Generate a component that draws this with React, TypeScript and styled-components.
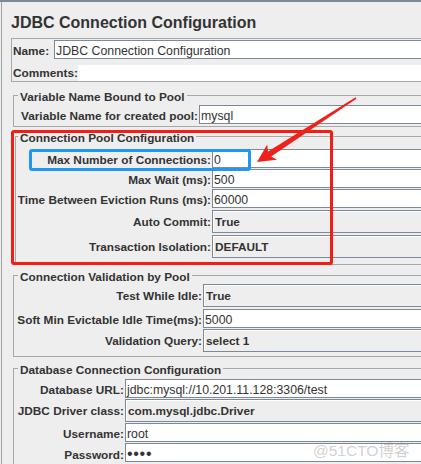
import React from "react";
import styled, { createGlobalStyle } from "styled-components";

const GlobalStyle = createGlobalStyle`
  html, body {
    margin: 0;
    padding: 0;
    background: #eeeeee;
    overflow: hidden;
  }
  body {
    font-family: "Liberation Sans", Arial, "Noto Sans CJK SC", sans-serif;
    color: #333333;
  }
`;

const Window = styled.div`
  position: relative;
  width: 421px;
  height: 464px;
  box-sizing: border-box;
  border-top: 2px solid #7d8b99;
  padding-left: 1px;
  overflow: hidden;
`;

const Content = styled.div`
  width: 480px;
  height: 100%;
  border-left: 1px solid #a3a3a3;
`;

const Title = styled.h1`
  margin: 0 0 5px;
  padding: 11px 0 0 9px;
  font-size: 16px;
  line-height: 20px;
  font-weight: bold;
  color: #333333;
`;

const NamePanel = styled.div`
  margin-left: 9px;
  border: 1px solid #a8a8a8;
  border-right: none;
  padding: 1px 0 0 1px;
  display: flex;
  flex-direction: column;
  gap: 6px;
`;

const NameRow = styled.div`
  display: flex;
  align-items: baseline;
  gap: 5px;
`;

const CommentsRow = styled.div`
  display: flex;
  align-items: center;
  height: 16px;
`;

const CommentsArea = styled.div`
  flex: 1;
  align-self: stretch;
  background: #ffffff;
`;

const Label = styled.span`
  font-size: 11.8px;
  font-weight: bold;
  color: #333333;
  white-space: nowrap;
`;

const RowLabel = styled(Label)`
  justify-self: end;
  padding-right: 1px;
`;

const TextField = styled.div`
  flex: 1;
  height: 19px;
  box-sizing: border-box;
  border: 1px solid #7a8a99;
  background: #ffffff;
  padding: 3px 1px 0;
  line-height: 14px;
  font-size: 12.3px;
  color: #333333;
  white-space: nowrap;
  overflow: hidden;
`;

const Combo = styled.div`
  height: 23px;
  box-sizing: border-box;
  border: 1px solid #7a8a99;
  box-shadow: inset 1px 1px 0 #ffffff;
  background: #eeeeee;
  padding: 4px 2px 0;
  line-height: 14px;
  font-size: 11.8px;
  font-weight: bold;
  color: #333333;
  white-space: nowrap;
  overflow: hidden;
`;

const Dots = styled.span`
  font-size: 16px;
  letter-spacing: 0.7px;
`;

const Group = styled.fieldset<{ $left?: number; $mt: number; $pt: number; $pb: number }>`
  margin: ${(p) => p.$mt}px 0 0 ${(p) => p.$left ?? 11}px;
  padding: ${(p) => p.$pt}px 0 ${(p) => p.$pb}px 0;
  border: 1px solid #a8a8a8;
  border-right: none;
  min-width: 0;
`;

const Legend = styled.legend<{ $offset?: number }>`
  margin-left: ${(p) => p.$offset ?? 4}px;
  padding: 3px 2px 0;
  font-size: 11.8px;
  line-height: 14px;
  font-weight: bold;
  color: #333333;
`;

const Row = styled.div<{ $label: number; $mt?: number }>`
  display: grid;
  grid-template-columns: ${(p) => p.$label}px 1fr;
  align-items: baseline;
  margin-top: ${(p) => p.$mt ?? 0}px;
`;

const Highlight = styled.div<{ $x: number; $y: number; $w: number; $h: number; $color: string }>`
  position: absolute;
  left: ${(p) => p.$x}px;
  top: ${(p) => p.$y}px;
  width: ${(p) => p.$w}px;
  height: ${(p) => p.$h}px;
  box-sizing: border-box;
  border: 3px solid ${(p) => p.$color};
  border-radius: 3px;
  pointer-events: none;
`;

const ArrowLayer = styled.svg`
  position: absolute;
  left: 0;
  top: -2px;
  pointer-events: none;
`;

const Watermark = styled.div`
  position: absolute;
  left: 313px;
  top: 436px;
  font-family: "Liberation Sans", "Noto Sans CJK SC", sans-serif;
  font-size: 15.5px;
  color: rgba(150, 150, 150, 0.45);
  white-space: nowrap;
  pointer-events: none;
`;

type Field = { label: string; value: string; kind: "text" | "combo" | "password"; mt?: number };

const renderValue = (f: Field) => {
  if (f.kind === "combo") return <Combo>{f.value}</Combo>;
  if (f.kind === "password")
    return (
      <TextField>
        <Dots>{"\u2022".repeat(f.value.length)}</Dots>
      </TextField>
    );
  return <TextField>{f.value}</TextField>;
};

const poolFields: Field[] = [
  { label: "Max Number of Connections:", value: "0", kind: "text" },
  { label: "Max Wait (ms):", value: "500", kind: "text", mt: 1 },
  { label: "Time Between Eviction Runs (ms):", value: "60000", kind: "text", mt: 1 },
  { label: "Auto Commit:", value: "True", kind: "combo", mt: 2 },
  { label: "Transaction Isolation:", value: "DEFAULT", kind: "combo", mt: 2 },
];

const validationFields: Field[] = [
  { label: "Test While Idle:", value: "True", kind: "combo" },
  { label: "Soft Min Evictable Idle Time(ms):", value: "5000", kind: "text", mt: 2 },
  { label: "Validation Query:", value: "select 1", kind: "combo", mt: 1 },
];

const databaseFields: Field[] = [
  { label: "Database URL:", value: "jdbc:mysql://10.201.11.128:3306/test", kind: "text" },
  { label: "JDBC Driver class:", value: "com.mysql.jdbc.Driver", kind: "combo", mt: 1 },
  { label: "Username:", value: "root", kind: "text", mt: 1 },
  { label: "Password:", value: "root", kind: "password", mt: 1 },
];

function Rows({ fields, labelWidth }: { fields: Field[]; labelWidth: number }) {
  return (
    <>
      {fields.map((f) => (
        <Row key={f.label} $label={labelWidth} $mt={f.mt}>
          <RowLabel>{f.label}</RowLabel>
          {renderValue(f)}
        </Row>
      ))}
    </>
  );
}

// arrow pointing from the top right down to the highlighted field
const arrow = [
  [257, 162],
  [277, 159.8],
  [271.2, 156.4],
  [356.4, 98.7],
  [355.6, 97.3],
  [268, 151.4],
  [267.2, 144.6],
]
  .map((p) => p.join(","))
  .join(" ");

export default function App() {
  return (
    <>
      <GlobalStyle />
      <Window>
        <Content>
          <Title>JDBC Connection Configuration</Title>
          <NamePanel>
            <NameRow>
              <Label>Name:</Label>
              <TextField>JDBC Connection Configuration</TextField>
            </NameRow>
            <CommentsRow>
              <Label>Comments:</Label>
              <CommentsArea />
            </CommentsRow>
          </NamePanel>

          <Group $mt={5} $pt={1} $pb={2}>
            <Legend>Variable Name Bound to Pool</Legend>
            <Row $label={185}>
              <RowLabel>Variable Name for created pool:</RowLabel>
              <TextField>mysql</TextField>
            </Row>
          </Group>

          <Group $left={13} $mt={1} $pt={4} $pb={6}>
            <Legend $offset={2}>Connection Pool Configuration</Legend>
            <Rows fields={poolFields} labelWidth={196} />
          </Group>

          <Group $mt={2} $pt={0} $pb={4}>
            <Legend>Connection Validation by Pool</Legend>
            <Rows fields={validationFields} labelWidth={189} />
          </Group>

          <Group $mt={3} $pt={2} $pb={4}>
            <Legend>Database Connection Configuration</Legend>
            <Rows fields={databaseFields} labelWidth={111} />
          </Group>
        </Content>

        <Highlight $x={11} $y={128} $w={322} $h={135} $color="#f31d16" />
        <Highlight $x={29} $y={147} $w={222} $h={22} $color="#1e98f0" />
        <ArrowLayer width={421} height={464}>
          <polygon points={arrow} fill="#f0201a" />
        </ArrowLayer>
        <Watermark>@51CTO博客</Watermark>
      </Window>
    </>
  );
}
